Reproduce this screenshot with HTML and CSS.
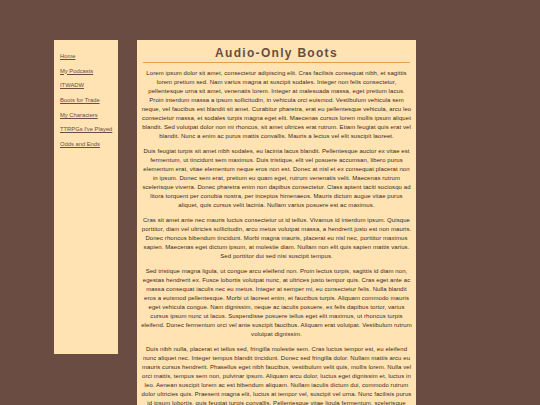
FILE: index.html
```html
<!DOCTYPE html>
<html lang="en">
<head>
<meta charset="utf-8">
<title>Audio-Only Boots</title>
<link rel="stylesheet" href="styles.css">
</head>
<body>
<div class="page">
  <nav class="sidebar">
    <a href="#">Home</a>
    <a href="#">My Podcasts</a>
    <a href="#">ITWADW</a>
    <a href="#">Boots for Trade</a>
    <a href="#">My Characters</a>
    <a href="#">TTRPGs I've Played</a>
    <a href="#">Odds and Ends</a>
  </nav>
  <main class="content">
    <h1 class="title">Audio-Only Boots</h1>
    <p>Lorem ipsum dolor sit amet, consectetur adipiscing elit. Cras facilisis consequat nibh, et sagittis lorem pretium sed. Nam varius magna at suscipit sodales. Integer non felis consectetur, pellentesque urna sit amet, venenatis lorem. Integer at malesuada massa, eget pretium lacus. Proin interdum massa a ipsum sollicitudin, in vehicula orci euismod. Vestibulum vehicula sem neque, vel faucibus est blandit sit amet. Curabitur pharetra, erat eu pellentesque vehicula, arcu leo consectetur massa, et sodales turpis magna eget elit. Maecenas cursus lorem mollis ipsum aliquet blandit. Sed volutpat dolor non mi rhoncus, sit amet ultrices erat rutrum. Etiam feugiat quis erat vel blandit. Nunc a enim ac purus mattis convallis. Mauris a lectus vel elit suscipit laoreet.</p>
    <p>Duis feugiat turpis sit amet nibh sodales, eu lacinia lacus blandit. Pellentesque auctor ex vitae est fermentum, ut tincidunt sem maximus. Duis tristique, elit vel posuere accumsan, libero purus elementum erat, vitae elementum neque eros non est. Donec at nisl et ex consequat placerat non in ipsum. Donec sem erat, pretium eu quam eget, rutrum venenatis velit. Maecenas rutrum scelerisque viverra. Donec pharetra enim non dapibus consectetur. Class aptent taciti sociosqu ad litora torquent per conubia nostra, per inceptos himenaeos. Mauris dictum augue vitae purus aliquet, quis cursus velit lacinia. Nullam varius posuere est ac maximus.</p>
    <p>Cras sit amet ante nec mauris luctus consectetur ut id tellus. Vivamus id interdum ipsum. Quisque porttitor, diam vel ultricies sollicitudin, arcu metus volutpat massa, a hendrerit justo est non mauris. Donec rhoncus bibendum tincidunt. Morbi magna mauris, placerat eu nisl nec, porttitor maximus sapien. Maecenas eget dictum ipsum, at molestie diam. Nullam non elit quis sapien mattis varius. Sed porttitor dui sed nisi suscipit tempus.</p>
    <p>Sed tristique magna ligula, ut congue arcu eleifend non. Proin lectus turpis, sagittis id diam non, egestas hendrerit ex. Fusce lobortis volutpat nunc, at ultrices justo tempor quis. Cras eget ante ac massa consequat iaculis nec eu metus. Integer at semper mi, eu consectetur felis. Nulla blandit eros a euismod pellentesque. Morbi ut laoreet enim, et faucibus turpis. Aliquam commodo mauris eget vehicula congue. Nam dignissim, neque ac iaculis posuere, ex felis dapibus tortor, varius cursus ipsum nunc ut lacus. Suspendisse posuere tellus eget elit maximus, ut rhoncus turpis eleifend. Donec fermentum orci vel ante suscipit faucibus. Aliquam erat volutpat. Vestibulum rutrum volutpat dignissim.</p>
    <p>Duis nibh nulla, placerat et tellus sed, fringilla molestie sem. Cras luctus tempor est, eu eleifend nunc aliquet nec. Integer tempus blandit tincidunt. Donec sed fringilla dolor. Nullam mattis arcu eu mauris cursus hendrerit. Phasellus eget nibh faucibus, vestibulum velit quis, mollis lorem. Nulla vel orci mattis, tempus sem non, pulvinar ipsum. Aliquam arcu dolor, luctus eget dignissim et, luctus in leo. Aenean suscipit lorem ac est bibendum aliquam. Nullam iaculis dictum dui, commodo rutrum dolor ultricies quis. Praesent magna elit, luctus at tempor vel, suscipit vel urna. Nunc facilisis purus id ipsum lobortis, quis feugiat turpis convallis. Pellentesque vitae ligula fermentum, scelerisque sem sit amet, congue leo. Nulla ultricies ex aliquet, pellentesque arcu vitae, vulputate nisl. Donec dapibus bibendum metus in tincidunt. Sed vel lectus a magna tempus pretium.</p>
  </main>
</div>
</body>
</html>
```

FILE: styles.css
```css
html, body {
  margin: 0;
  padding: 0;
  background: #6b4c42;
}

body {
  font-family: "Liberation Sans", Arial, sans-serif;
  height: 405px;
  overflow: hidden;
}

.page {
  display: flex;
  align-items: flex-start;
  gap: 19px;
  padding: 40px 0 0 54px;
}

.sidebar {
  width: 64px;
  height: 314px;
  box-sizing: border-box;
  background: #ffe3b3;
  display: flex;
  flex-direction: column;
  gap: 6.7px;
  padding: 12px 0 0 6px;
}

.sidebar a {
  font-size: 5.8px;
  line-height: 8px;
  color: #6b4c42;
  text-decoration: underline;
  white-space: nowrap;
}

.content {
  width: 279px;
  box-sizing: border-box;
  background: #ffe3b3;
  padding: 6px 4px 10px;
}

.title {
  margin: 0 2px 6px;
  padding: 0 0 1px;
  font-size: 12px;
  line-height: 15px;
  font-weight: bold;
  letter-spacing: 1.3px;
  text-align: center;
  color: #6b4c42;
  border-bottom: 1px solid #e0a050;
}

.content p {
  margin: 0 0 6px;
  font-size: 6px;
  line-height: 9px;
  letter-spacing: 0.08px;
  text-align: center;
  color: #3a2a20;
}
```
